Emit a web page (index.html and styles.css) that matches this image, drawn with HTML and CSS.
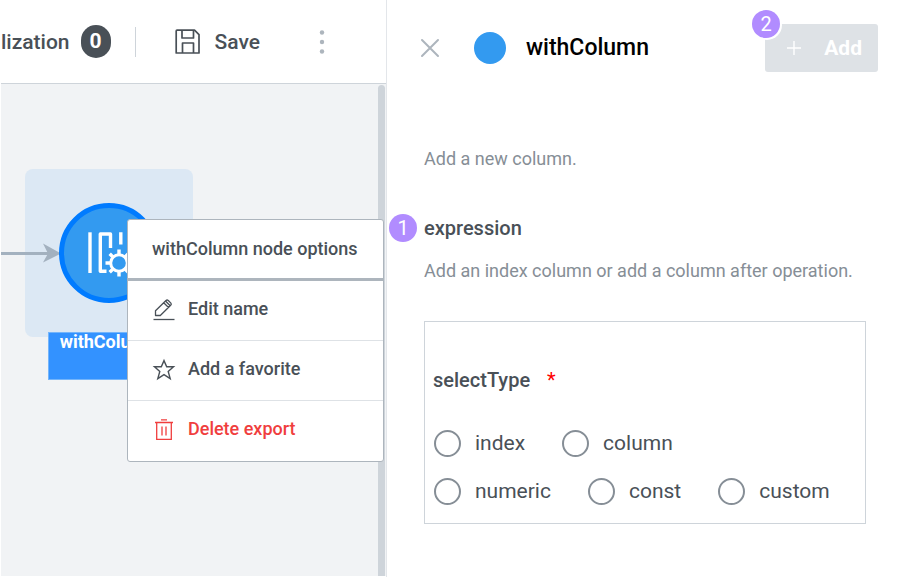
FILE: index.html
```html
<!DOCTYPE html>
<html lang="en">
<head>
<meta charset="utf-8">
<title>withColumn</title>
<link rel="stylesheet" href="styles.css">
</head>
<body>
<div class="app">
  <section class="workspace">
    <header class="toolbar">
      <span class="tool-label">lization</span>
      <span class="count">0</span>
      <span class="divider"></span>
      <button class="save" type="button">
        <svg width="26" height="26" viewBox="0 0 26 26" fill="none" stroke="#495057" stroke-width="1.7" stroke-linejoin="round"><path d="M2 1.2H19.5L24 5.7V24H1.2V2Q1.2 1.2 2 1.2Z"/><path d="M7 1.5V9H18.5V1.5M7.5 24V14H18.5V24"/></svg>
        <span>Save</span>
      </button>
      <button class="more" type="button" aria-label="More">
        <svg width="6" height="24" viewBox="0 0 6 24" fill="#adb5bd"><circle cx="3" cy="2.5" r="2.2"/><circle cx="3" cy="12" r="2.2"/><circle cx="3" cy="21.5" r="2.2"/></svg>
      </button>
    </header>
    <div class="canvas">
      <div class="node-area"></div>
      <svg class="edge" width="60" height="22" viewBox="0 0 60 22"><path d="M0 11.5H48" stroke="#a3b1bf" stroke-width="3"/><path d="M42 1.5L60 11.5L42 20.5L47 11.5Z" fill="#a3b1bf"/></svg>
      <div class="node-name">withColumn</div>
      <svg class="node" width="100" height="100" viewBox="0 0 100 100" fill="none"><circle cx="50" cy="50" r="47.5" fill="#339af0" stroke="#007bff" stroke-width="5"/><g stroke="#fff" stroke-width="3.4"><path d="M31 29.3V70"/><path stroke-linejoin="round" d="M47.5 68.3H41.3V31H51.5V45M61.8 29.3V41.5"/><circle cx="60" cy="60" r="8.3" stroke-width="3"/><path d="M60 46.5V51M60 69V73.5M46.5 60H51M69 60H73.5M50.7 50.7L53.7 53.7M66.3 66.3L69.3 69.3M50.7 69.3L53.7 66.3M66.3 53.7L69.3 50.7"/></g></svg>
      <div class="scrollbar"></div>
      <div class="menu">
        <h2 class="menu-title">withColumn node options</h2>
        <button class="menu-item" type="button">
          <svg width="24" height="24" viewBox="0 0 24 24" fill="none" stroke="#495057" stroke-width="1.3" stroke-linejoin="round"><path d="M1.5 22.5H22.5"/><path d="M3.5 18.5V13.8L14 3.5Q15.1 2.5 16.3 3.5L18.9 6.1Q19.8 7.2 18.7 8.3L8.3 18.5ZM11.7 5.8L16.5 10.5"/><path d="M13.5 4L18.2 8.8"/></svg>
          <span>Edit name</span>
        </button>
        <button class="menu-item" type="button">
          <svg width="24" height="24" viewBox="0 0 24 24" fill="none" stroke="#495057" stroke-width="1.4"><path d="M12 3.6L14.7 9.8H21.5L16.2 14.4L18.2 21.6L12 17.6L5.8 21.6L7.8 14.4L2.5 9.8H9.3Z"/></svg>
          <span>Add a favorite</span>
        </button>
        <button class="menu-item danger" type="button">
          <svg width="24" height="24" viewBox="0 0 24 24" fill="none" stroke="#f03e3e" stroke-width="1.3"><path d="M3 5.5H21M9 2.8H15M4.7 5.5V22.3H19.3V5.5M10 9.5V18.5M14 9.5V18.5"/></svg>
          <span>Delete export</span>
        </button>
      </div>
    </div>
  </section>
  <main class="panel">
    <header class="panel-head">
      <button class="close" type="button" aria-label="Close">
        <svg width="20" height="20" viewBox="0 0 20 20" stroke="#adb5bd" stroke-width="2" stroke-linecap="round"><path d="M2 2L18 18M18 2L2 18"/></svg>
      </button>
      <span class="dot"></span>
      <h1 class="panel-title">withColumn</h1>
      <div class="add-wrap">
        <button class="add" type="button" disabled>
          <svg width="16" height="16" viewBox="0 0 16 16" stroke="#fff" stroke-width="1.4"><path d="M1 8H15M8 1V15"/></svg>
          <span>Add</span>
        </button>
        <span class="step step-add">2</span>
      </div>
    </header>
    <p class="text intro">Add a new column.</p>
    <h2 class="field-title"><span class="step step-field">1</span>expression</h2>
    <p class="text">Add an index column or add a column after operation.</p>
    <fieldset class="box" aria-labelledby="select-type">
      <div class="group-title" id="select-type">selectType <span class="required">*</span></div>
      <div class="options">
        <label class="option"><input type="radio" name="type">index</label>
        <label class="option"><input type="radio" name="type">column</label>
      </div>
      <div class="options">
        <label class="option"><input type="radio" name="type">numeric</label>
        <label class="option"><input type="radio" name="type">const</label>
        <label class="option"><input type="radio" name="type">custom</label>
      </div>
    </fieldset>
  </main>
</div>
</body>
</html>
```
FILE: styles.css
```css
* { box-sizing: border-box; }
body {
  margin: 0;
  background: #fff;
  color: #495057;
  font-family: Roboto, "Liberation Sans", sans-serif;
  font-size: 18px;
  line-height: 24px;
}
button {
  margin: 0;
  padding: 0;
  border: 0;
  background: none;
  color: inherit;
  font: inherit;
}
h1, h2, p { margin: 0; }
svg { display: block; flex: none; }

.app {
  display: grid;
  grid-template-columns: 43% 1fr;
  min-height: 100vh;
}
.workspace {
  display: flex;
  flex-direction: column;
  border-right: 1px solid #e3e6ea;
  padding: 0 0 1px 1px;
}
.toolbar {
  display: flex;
  align-items: center;
  height: 84px;
  border-bottom: 1px solid #ced4da;
  font-size: 21px;
  font-weight: 500;
}
.count {
  width: 30px;
  margin-left: 11px;
  border-radius: 16px;
  background: #495057;
  color: #fff;
  font-weight: 700;
  line-height: 33px;
  text-align: center;
}
.divider {
  width: 1px;
  height: 30px;
  margin: 0 39px 0 24px;
  background: #ced4da;
}
.save {
  display: flex;
  align-items: center;
  gap: 14px;
}
.more { margin-left: 59px; }

.canvas {
  position: relative;
  flex: 1;
  background: #f1f3f5;
}
.node-area {
  position: absolute;
  left: 24px;
  top: 85px;
  width: 168px;
  height: 168px;
  border-radius: 8px;
  background: #dce8f4;
}
.edge { position: absolute; left: 0; top: 158px; }
.node { position: absolute; left: 58px; top: 119px; }
.node-name {
  position: absolute;
  left: 47px;
  top: 248px;
  width: 120px;
  height: 48px;
  border: 1px solid #74b5fb;
  background: #3392ff;
  color: #fff;
  font-weight: 700;
  line-height: 18px;
  text-align: center;
}
.scrollbar {
  position: absolute;
  right: 1px;
  top: 1px;
  bottom: 0;
  width: 7px;
  border-radius: 4px 4px 0 0;
  background: #ced4da;
}
.menu {
  position: absolute;
  left: 126px;
  top: 135px;
  width: 257px;
  border: 1px solid #adb5bd;
  border-radius: 3px;
  background: #fff;
  font-weight: 500;
}
.menu-title {
  padding: 17px 24px;
  border-bottom: 3px solid #adb5bd;
  font-size: 18px;
  font-weight: 500;
}
.menu-item {
  display: flex;
  align-items: center;
  gap: 12px;
  width: 100%;
  height: 60px;
  padding: 0 24px 3px;
  border-bottom: 1px solid #dee2e6;
}
.menu-item:last-child { border-color: transparent; }
.danger { color: #f03e3e; }

.panel { padding: 24px 34px 24px 37px; }
.panel-head {
  display: flex;
  align-items: center;
  height: 48px;
  margin: 0 -12px 0 -4px;
}
.dot {
  width: 32px;
  height: 32px;
  margin: 0 20px 0 34px;
  border-radius: 50%;
  background: #339af0;
}
.panel-title {
  color: #000;
  font-size: 23px;
  font-weight: 500;
}
.add-wrap { position: relative; margin-left: auto; }
.add {
  display: flex;
  align-items: center;
  gap: 22px;
  height: 48px;
  padding: 0 16px 0 21px;
  border-radius: 3px;
  background: #dee2e6;
  color: #fff;
  font-size: 21px;
  font-weight: 700;
}
.step {
  position: absolute;
  width: 28px;
  height: 28px;
  border-radius: 50%;
  background: #b18cff;
  color: #fff;
  font-size: 20px;
  font-weight: 400;
  line-height: 28px;
  text-align: center;
}
.step-add { left: -13px; top: -14px; box-shadow: 1px 1px 0 1px #fff; }
.step-field { left: -35px; top: -2px; }
.close { padding: 3px; margin: -3px; }

.text { color: #868e96; }
.intro { margin: 75px 0 45px; }
.field-title {
  position: relative;
  margin-bottom: 19px;
  font-size: 20px;
  font-weight: 500;
}
.box {
  margin: 38px 0 0;
  padding: 46px 8px 8px;
  border: 1px solid #ced4da;
}
.group-title {
  margin-bottom: 27px;
  font-size: 20px;
  font-weight: 500;
}
.required { margin-left: 12px; color: #f00; font-weight: 400; }
.options { display: flex; gap: 37px; padding-left: 1px; }
.option {
  display: flex;
  align-items: center;
  gap: 14px;
  height: 48px;
  font-size: 21px;
}
.option input {
  appearance: none;
  width: 27px;
  height: 27px;
  margin: 0;
  border: 2px solid #868e96;
  border-radius: 50%;
}
```
